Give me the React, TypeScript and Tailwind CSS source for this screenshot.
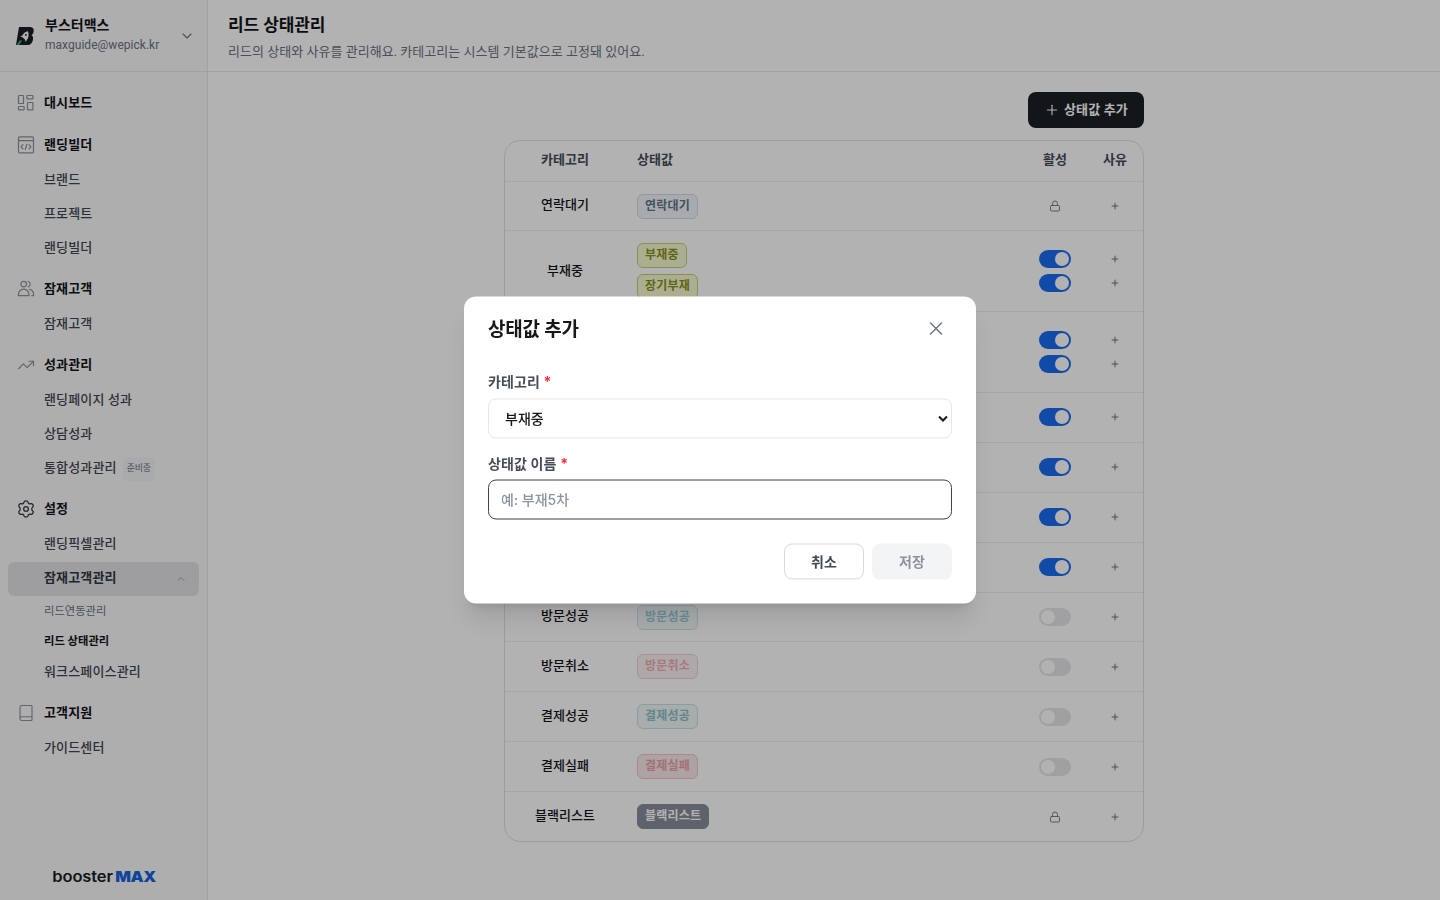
import React from 'react';
import { ChevronDown, ChevronUp, Lock, Plus, X, Book, TrendingUp } from 'lucide-react';

interface MenuItem {
  label: string;
  badge?: string;
}

interface StatusRow {
  category: string;
  values: string[];
  tone: string;
  height: string;
  state: 'locked' | 'on' | 'off';
}

const rows: StatusRow[] = [
  { category: '연락대기', values: ['연락대기'], tone: 'border-[#d3dae4] bg-[#f1f5f9] text-[#64748b]', height: 'h-[49px]', state: 'locked' },
  { category: '부재중', values: ['부재중', '장기부재'], tone: 'border-[#c3cf72] bg-[#f7fad2] text-[#87911c]', height: 'h-[81px]', state: 'on' },
  { category: '상담중', values: ['상담중', '재상담'], tone: 'border-blue-300 bg-blue-100 text-blue-700', height: 'h-[81px]', state: 'on' },
  { category: '상담완료', values: ['상담완료'], tone: 'border-blue-300 bg-blue-100 text-blue-700', height: 'h-[50px] pb-px', state: 'on' },
  { category: '상담거절', values: ['상담거절'], tone: 'border-red-300 bg-red-100 text-red-700', height: 'h-[50px] pb-px', state: 'on' },
  { category: '방문예약', values: ['방문예약'], tone: 'border-cyan-300 bg-cyan-100 text-cyan-700', height: 'h-[50px] pb-px', state: 'on' },
  { category: '예약취소', values: ['예약취소'], tone: 'border-red-300 bg-red-100 text-red-700', height: 'h-[50px] pb-px', state: 'on' },
  { category: '방문성공', values: ['방문성공'], tone: 'border-[#cbe3e8] bg-[#eff6f7] text-[#9acbd6]', height: 'h-[49px]', state: 'off' },
  { category: '방문취소', values: ['방문취소'], tone: 'border-[#f3cdd2] bg-[#fbf1f1] text-[#eeaeb6]', height: 'h-[50px]', state: 'off' },
  { category: '결제성공', values: ['결제성공'], tone: 'border-[#c8e0e5] bg-[#eff6f7] text-[#8fbfcc]', height: 'h-[50px]', state: 'off' },
  { category: '결제실패', values: ['결제실패'], tone: 'border-[#f1c4c9] bg-[#f9e9e9] text-[#e8a3ab]', height: 'h-[50px]', state: 'off' },
  { category: '블랙리스트', values: ['블랙리스트'], tone: 'border-[#868d9a] bg-[#868d9a] text-white', height: 'h-[49px]', state: 'locked' },
];

function DashboardIcon() {
  return (
    <svg width="18" height="18" viewBox="0 0 18 18" fill="none" stroke="currentColor" strokeWidth="1.2">
      <rect x="1.5" y="1.5" width="5" height="8" rx="0.6" />
      <rect x="9.9" y="1.5" width="6" height="3.4" rx="0.6" />
      <rect x="1.5" y="12.5" width="5.6" height="3.4" rx="0.6" />
      <rect x="10.5" y="8.5" width="5.4" height="7.4" rx="0.6" />
    </svg>
  );
}

function BuilderIcon() {
  return (
    <svg width="18" height="18" viewBox="0 0 18 18" fill="none" stroke="currentColor" strokeWidth="1.2" strokeLinecap="round" strokeLinejoin="round">
      <rect x="1.5" y="0.9" width="15" height="16" rx="1.2" />
      <path d="M1.5 4.6h15M6 8.7l-2 2.1 2 2.1M12 8.7l2 2.1-2 2.1M9.9 8.3l-1.6 5" />
    </svg>
  );
}

function PeopleIcon() {
  return (
    <svg width="18" height="18" viewBox="0 0 18 18" fill="none" stroke="currentColor" strokeWidth="1.2" strokeLinecap="round" strokeLinejoin="round">
      <circle cx="6.7" cy="4.1" r="2.8" />
      <path d="M1.4 15.600v-1.100a5.300 5.300 0 0 1 10.600 0v1.100zM11 1.500a2.800 2.800 0 0 1 .3 5.400M12.700 9.400a5.200 5.200 0 0 1 3.900 4.900v1.300h-1.800" />
    </svg>
  );
}

function GearIcon() {
  return (
    <svg width="18" height="18" viewBox="0 0 24 24" fill="none" stroke="currentColor" strokeWidth="1.7" strokeLinecap="round" strokeLinejoin="round">
      <path d="M9.3 2.800c.5-2 4.900-2 5.400 0a2.600 2.600 0 0 0 3.700 2.100c2-.9 4.200 2.900 2.600 4.300a3.600 3.600 0 0 0 0 5.600c1.600 1.400-.6 5.200-2.600 4.300a2.600 2.600 0 0 0-3.700 2.100c-.5 2-4.900 2-5.400 0a2.600 2.600 0 0 0-3.700-2.100c-2 .9-4.200-2.900-2.600-4.300a3.600 3.600 0 0 0 0-5.600c-1.600-1.400.6-5.200 2.600-4.300a2.600 2.600 0 0 0 3.700-2.100z" />
      <circle cx="12" cy="12" r="3.1" />
    </svg>
  );
}

function BrandMark() {
  return (
    <svg width="20" height="20" viewBox="0 0 20 20">
      <path d="M4 1h10.500c3 0 4.500 1.500 4.200 4-.2 2-.9 3.400-2.200 4.200 1.300.7 1.800 2 1.500 4-.5 3.700-2.400 5.800-6 5.800H1z" fill="#171c22" />
      <path d="M13 5.200c-2.700.4-4.700 2-5.700 4.300l-2.100 1 2.200.8 2.500 2.300.9 2.300 1.300-2.400c1.600-1.700 2.100-4.900.9-8.300z" fill="#f9fafb" />
      <circle cx="10.900" cy="9" r="0.900" fill="#171c22" />
      <path d="M4.800 14.600l2.300-.3-2.900 4.700H1.600z" fill="#2fae8c" />
    </svg>
  );
}

function MenuGroup({ icon, title, active, items = [] }: { icon: React.ReactNode; title: string; active?: boolean; items?: MenuItem[] }) {
  return (
    <div className="mb-1.5">
      <div className="flex h-9 items-center gap-[9px] pl-[9px]">
        <span className={active ? 'text-[#32373f]' : 'text-[#8b919b]'}>{icon}</span>
        <span className="text-[13px] font-semibold tracking-[0.15px] text-[#111418]">{title}</span>
      </div>
      {items.map((item) => (
        <SubItem key={item.label} {...item} />
      ))}
    </div>
  );
}

function SubItem({ label, badge }: MenuItem) {
  return (
    <div className="flex h-[34px] items-center pl-9 text-[13px] font-medium tracking-[0.15px] text-[#3f4651]">
      {label}
      {badge && (
        <span className="mt-0.5 ml-1.5 flex h-6 items-center rounded bg-[#f3f4f6] px-1 text-[9px] font-normal tracking-[-0.2px] text-gray-500">{badge}</span>
      )}
    </div>
  );
}

function Toggle({ on }: { on: boolean }) {
  return (
    <span className={`flex h-[18px] w-8 items-center rounded-full px-0.5 ${on ? 'justify-end bg-[#1a6cf0]' : 'justify-start bg-[#e5e6e8]'}`}>
      <span className="h-3.5 w-3.5 rounded-full bg-white" />
    </span>
  );
}

function Sidebar() {
  return (
    <aside className="flex w-52 shrink-0 flex-col border-r border-gray-200 bg-[#f9f9f9]">
      <div className="flex h-[72px] shrink-0 items-center border-b border-gray-200 pr-3 pl-[15px]">
        <BrandMark />
        <div className="-mt-[2px] ml-2.5 flex-1">
          <div className="-mt-px mb-px text-sm leading-5 font-semibold text-[#111418]">부스터맥스</div>
          <div className="text-xs leading-[18px] tracking-[0.03px] text-gray-500">maxguide@wepick.kr</div>
        </div>
        <ChevronDown className="h-4 w-4 text-gray-500" strokeWidth={1.7} />
      </div>

      <nav className="flex-1 px-2 pt-[13px]">
        <MenuGroup icon={<DashboardIcon />} title="대시보드" />
        <MenuGroup icon={<BuilderIcon />} title="랜딩빌더" items={[{ label: '브랜드' }, { label: '프로젝트' }, { label: '랜딩빌더' }]} />
        <MenuGroup icon={<PeopleIcon />} title="잠재고객" items={[{ label: '잠재고객' }]} />
        <MenuGroup
          icon={<TrendingUp size={18} strokeWidth={1.5} />}
          title="성과관리"
          items={[{ label: '랜딩페이지 성과' }, { label: '상담성과' }, { label: '통합성과관리', badge: '준비중' }]}
        />
        <div className="mb-1.5">
          <MenuGroup icon={<GearIcon />} title="설정" active items={[{ label: '랜딩픽셀관리' }]} />
          <div className="-mt-[5px] flex h-[34px] items-center justify-between rounded-md bg-[#e3e3e6] pr-3 pl-9 text-[13px] font-semibold tracking-[0.15px] text-[#32373f]">
            <span className="pb-0.5">잠재고객관리</span>
            <ChevronUp className="h-3 w-3 text-gray-400" strokeWidth={2} />
          </div>
          <div className="flex h-[30px] items-center pt-0.5 pl-9 text-[11.3px] text-gray-500">리드연동관리</div>
          <div className="-mb-px flex h-[30px] items-center pt-0.5 pl-9 text-[11.3px] font-bold text-[#111418]">리드 상태관리</div>
          <SubItem label="워크스페이스관리" />
        </div>
        <MenuGroup icon={<Book size={18} strokeWidth={1.5} />} title="고객지원" items={[{ label: '가이드센터' }]} />
      </nav>

      <div className="flex h-12 justify-center pl-px">
        <div className="scale-x-110 font-[Inter] text-[15px] leading-[49px] font-semibold tracking-[-0.1px] text-[#171c22]">
          booster<span className="ml-0.5 font-black tracking-[-0.4px] text-[#1663dc]">MAX</span>
        </div>
      </div>
    </aside>
  );
}

function StatusTable() {
  return (
    <div className="rounded-2xl border border-[#dfe1e5] text-[13px]">
      <div className="flex h-[41px] items-center border-b border-[#eceef1] pb-0.5 font-semibold text-[#454c58]">
        <div className="w-[120px] text-center">카테고리</div>
        <div className="flex-1 pl-3">상태값</div>
        <div className="w-[60px] text-center">활성</div>
        <div className="mr-[-2px] w-[60px] text-center">사유</div>
      </div>
      {rows.map((row) => (
        <div key={row.category} className={`flex ${row.height} items-center border-b border-[#eceef1] last:border-b-0`}>
          <div className={`w-[120px] text-center font-medium text-[#111418] ${row.height === 'h-[49px]' ? 'pb-0.5' : 'pb-px'}`}>{row.category}</div>
          <div className="flex flex-1 flex-col items-start gap-1.5 pl-3">
            {row.values.map((value) => (
              <span key={value} className={`flex h-[25px] items-center rounded-md border px-[7px] pb-px text-xs font-semibold tracking-[0.2px] ${row.tone}`}>
                {value}
              </span>
            ))}
          </div>
          <div className="flex w-[60px] flex-col items-center gap-1.5">
            {row.values.map((value) =>
              row.state === 'locked' ? (
                <Lock key={value} className="h-3 w-3 text-gray-500" strokeWidth={1.8} />
              ) : (
                <Toggle key={value} on={row.state === 'on'} />
              )
            )}
          </div>
          <div className="mr-[-2px] flex w-[60px] flex-col items-center gap-1.5">
            {row.values.map((value) => (
              <span key={value} className="flex h-[18px] items-center">
                <Plus className="h-2.5 w-2.5 text-gray-500" strokeWidth={2.4} />
              </span>
            ))}
          </div>
        </div>
      ))}
    </div>
  );
}

function AddStatusModal() {
  return (
    <div className="fixed inset-0 bg-black/30">
      <div className="absolute top-1/2 left-1/2 h-[307px] w-[512px] -translate-x-1/2 -translate-y-1/2 transform-gpu rounded-xl bg-white px-6 pt-4 font-[Inter,'Noto_Sans_CJK_KR',sans-serif] shadow-[0_20px_25px_-5px_rgba(0,0,0,0.1),0_8px_10px_-6px_rgba(0,0,0,0.1)]">
        <div className="flex h-8 items-center justify-between">
          <h2 className="pt-[3px] text-[19px] font-bold tracking-[-0.2px] text-[#18181b]">상태값 추가</h2>
          <button className="flex h-8 w-8 items-center justify-center text-gray-500">
            <X size={22} strokeWidth={1.5} />
          </button>
        </div>

        <label className="mt-[27px] block text-sm leading-5 font-semibold tracking-[0.1px] text-[#454c58]">
          카테고리 <span className="font-bold text-red-500">*</span>
        </label>
        <select className="mt-[7px] h-10 w-full rounded-lg border border-[#e5e7eb] bg-white px-3 pb-0.5 text-sm font-medium text-[#18181b]">
          <option>부재중</option>
        </select>

        <label className="mt-[15px] block text-sm leading-5 font-semibold tracking-[0.1px] text-[#454c58]">
          상태값 이름 <span className="font-bold text-red-500">*</span>
        </label>
        <input
          className="mt-1.5 h-10 w-full rounded-lg border border-[#3f4247] px-3 pb-0.5 text-sm font-medium outline-none placeholder:text-[#8b93a1]"
          placeholder="예: 부재5차"
        />

        <div className="mt-6 flex justify-end gap-2">
          <button className="h-9 w-20 rounded-lg border border-[#d6d8de] text-sm font-semibold text-[#454c58]">취소</button>
          <button className="h-9 w-20 rounded-lg bg-[#f3f4f6] text-sm font-semibold text-[#8b93a1]">저장</button>
        </div>
      </div>
    </div>
  );
}

export default function App() {
  return (
    <div className="flex h-screen overflow-hidden bg-white font-[Roboto,'Noto_Sans_CJK_KR',sans-serif]">
      <Sidebar />
      <main className="flex-1">
        <header className="h-[72px] border-b border-gray-200 px-5 pt-[13px]">
          <h1 className="text-[17px] leading-6 font-semibold tracking-[-0.1px] text-[#111418]">리드 상태관리</h1>
          <p className="mt-1 text-[13px] leading-[22px] tracking-[0.03px] text-gray-500">리드의 상태와 사유를 관리해요. 카테고리는 시스템 기본값으로 고정돼 있어요.</p>
        </header>
        <div className="mx-auto w-[640px] pt-5">
          <div className="mb-3 flex justify-end">
            <button className="flex h-9 w-29 items-center gap-1 rounded-lg bg-[#1c2024] pl-4 text-[13px] font-semibold tracking-[0.15px] whitespace-nowrap text-white">
              <Plus className="h-4 w-4 shrink-0" strokeWidth={1.7} />
              상태값 추가
            </button>
          </div>
          <StatusTable />
        </div>
      </main>
      <AddStatusModal />
    </div>
  );
}
